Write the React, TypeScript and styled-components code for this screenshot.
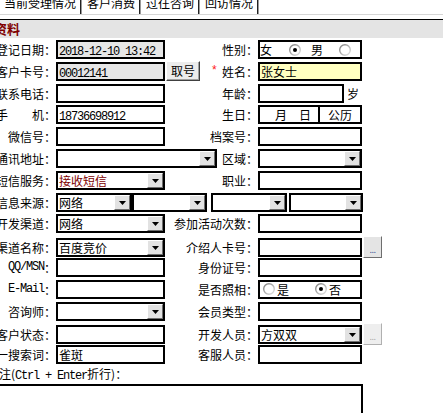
import React from 'react'
import styled, { createGlobalStyle } from 'styled-components'

const GlobalStyle = createGlobalStyle`
    html, body {
        margin: 0;
        padding: 0;
        background: #fff;
        overflow: hidden;
    }
    body {
        font-family: "Noto Sans CJK SC", "DejaVu Sans", sans-serif;
        font-size: 12px;
        color: #000;
    }
`

const Page = styled.div`
    width: 443px;
    height: 413px;
    overflow: hidden;
`

const TabBar = styled.div`
    display: flex;
    height: 14px;
    margin-left: -1px;
    border-bottom: 1px solid #d6d6d6;
    overflow: hidden;
`

const Tab = styled.div`
    padding: 0 4px 0 5px;
    margin-top: -3px;
    line-height: 12px;
    white-space: nowrap;
`

const TabDivider = styled.div`
    width: 0;
    height: 14px;
    border-left: 1px solid #222;
    border-right: 1px solid #999;
`

const SectionHeader = styled.div`
    margin-top: 4px;
    height: 18px;
    border-top: 1px solid #000;
    background: #e4e4e4;
    color: #800000;
    font-weight: bold;
    font-size: 13px;
    line-height: 18px;
    text-indent: -6px;
    white-space: nowrap;
`

const Form = styled.div`
    margin-top: 2px;
    display: flex;
    flex-direction: column;
    gap: 2.8px;
`

const Row = styled.div`
    display: grid;
    grid-template-columns: 56px 110px 92px 104px 1fr;
    height: 19px;
    align-items: center;
`

const Label = styled.div`
    display: flex;
    justify-content: flex-end;
    min-width: 0;
    white-space: nowrap;
    line-height: 19px;
`

const Mid = styled.div`
    display: flex;
    align-items: center;
    justify-content: flex-end;
    min-width: 0;
    height: 19px;
    white-space: nowrap;
`

const Latin = styled.span`
    font-family: "Liberation Mono", "DejaVu Sans Mono", monospace;
    letter-spacing: -1.2px;
`

const Box = styled.div<{ $w?: number; $bg?: string }>`
    box-sizing: border-box;
    width: ${({ $w }) => $w ?? 109}px;
    height: 19px;
    border: 2px solid #000;
    background: ${({ $bg }) => $bg ?? '#fff'};
    padding-left: 1px;
    line-height: 15px;
    white-space: nowrap;
    overflow: hidden;
`

const ChoiceBox = styled(Box)`
    display: flex;
    align-items: center;
    padding-left: 0;
`

const ChoiceText = styled.span<{ $ml: number }>`
    margin-left: ${({ $ml }) => $ml}px;
`

const RadioMark = styled.svg<{ $ml: number }>`
    flex: none;
    margin-left: ${({ $ml }) => $ml}px;
`

const DatePart = styled(Box)`
    width: 62px;
    padding-left: 15px;
`

const CalendarPart = styled(Box)`
    width: 42px;
    border-left: none;
    padding-left: 0;
    text-align: center;
`

const Pair = styled.div`
    display: flex;
    align-items: center;
`

const Unit = styled.span`
    margin-left: 3px;
`

const Select = styled.div<{ $w?: number; $ml?: number }>`
    box-sizing: border-box;
    display: flex;
    flex: none;
    width: ${({ $w }) => $w ?? 109}px;
    height: 19px;
    margin-left: ${({ $ml }) => $ml ?? 0}px;
    border: 2px solid #000;
    background: #fff;
`

const SelectValue = styled.div<{ $color?: string }>`
    flex: 1;
    min-width: 0;
    padding-left: 1px;
    line-height: 15px;
    color: ${({ $color }) => $color ?? '#000'};
    white-space: nowrap;
    overflow: hidden;
`

const DropButton = styled.div`
    box-sizing: border-box;
    display: flex;
    align-items: center;
    justify-content: center;
    width: 16px;
    height: 15px;
    padding-top: 1px;
    background: #e2e2e2;
    border-top: 1px solid #fff;
    border-left: 1px solid #fff;
    border-right: 1px solid #6e6e6e;
    border-bottom: 1px solid #6e6e6e;
`

const WideCell = styled.div`
    grid-column: 2 / 4;
    display: flex;
    align-items: center;
    justify-content: space-between;
    white-space: nowrap;
`

const SpanCell = styled.div`
    grid-column: 2 / 6;
    display: flex;
    align-items: center;
`

const FetchButton = styled.div`
    box-sizing: border-box;
    width: 34px;
    height: 20px;
    margin-right: auto;
    margin-top: -1px;
    background: #ececec;
    border-top: 1px solid #fff;
    border-left: 1px solid #fff;
    border-right: 1px solid #404040;
    border-bottom: 1px solid #404040;
    box-shadow: inset -1px -1px 0 #a0a0a0;
    text-align: center;
    line-height: 17px;
    font-size: 12px;
`

const Required = styled.span`
    margin-right: 4px;
    color: #ff2020;
    font-family: "Liberation Mono", monospace;
    font-size: 12px;
`

const EllipsisButton = styled.div<{ $disabled?: boolean }>`
    box-sizing: border-box;
    display: flex;
    align-items: flex-end;
    justify-content: center;
    width: 19px;
    height: 22px;
    margin-left: 1px;
    padding-bottom: 2px;
    background: ${({ $disabled }) => ($disabled ? '#eeeeee' : '#e4e4e4')};
    border-top: 1px solid #fff;
    border-left: 1px solid #fff;
    border-right: 1px solid ${({ $disabled }) => ($disabled ? '#b0b0b0' : '#6e6e6e')};
    border-bottom: 1px solid ${({ $disabled }) => ($disabled ? '#b0b0b0' : '#6e6e6e')};
    color: ${({ $disabled }) => ($disabled ? '#a0a0a0' : '#1c3f8c')};
    font-family: "DejaVu Sans", sans-serif;
    font-size: 8px;
    line-height: 8px;
    letter-spacing: -0.5px;
`

const NoteLabel = styled.div`
    margin-top: 2px;
    margin-left: -13px;
    height: 16px;
    line-height: 16px;
    white-space: nowrap;
`

const NoteBox = styled.div`
    box-sizing: border-box;
    margin-top: 2px;
    margin-left: -4px;
    width: 367px;
    height: 60px;
    border: 2px solid #000;
    background: #fff;
`

function Caret() {
    return (
        <svg width='7' height='4' viewBox='0 0 7 4'>
            <path d='M0 0H7L3.5 4Z' fill='#000' />
        </svg>
    )
}

function Radio({ checked, ml }: { checked?: boolean; ml: number }) {
    return (
        <RadioMark $ml={ml} width='12' height='12' viewBox='0 0 12 12'>
            <defs>
                <linearGradient id='radioRing' x1='0' y1='0' x2='1' y2='1'>
                    <stop offset='0' stopColor='#7a7a7a' />
                    <stop offset='1' stopColor='#e6e6e6' />
                </linearGradient>
            </defs>
            <circle cx='6' cy='6' r='5.3' fill='#fff' stroke='url(#radioRing)' strokeWidth='1.4' />
            {checked && <circle cx='6' cy='6' r='2' fill='#000' />}
        </RadioMark>
    )
}

function Dropdown({
    w,
    ml,
    value,
    color,
}: {
    w?: number
    ml?: number
    value?: string
    color?: string
}) {
    return (
        <Select $w={w} $ml={ml}>
            <SelectValue $color={color}>{value}</SelectValue>
            <DropButton>
                <Caret />
            </DropButton>
        </Select>
    )
}

export default function App() {
    return (
        <Page>
            <GlobalStyle />
            <TabBar>
                <Tab>当前受理情况</Tab>
                <TabDivider />
                <Tab>客户消费</Tab>
                <TabDivider />
                <Tab>过往咨询</Tab>
                <TabDivider />
                <Tab>回访情况</Tab>
                <TabDivider />
            </TabBar>
            <SectionHeader>资料</SectionHeader>
            <Form>
                <Row>
                    <Label>登记日期：</Label>
                    <Box $bg='#e6e6e6'>
                        <Latin>2018-12-10 13:42</Latin>
                    </Box>
                    <Mid>性别：</Mid>
                    <ChoiceBox $w={104}>
                        <ChoiceText $ml={0}>女</ChoiceText>
                        <Radio checked ml={17} />
                        <ChoiceText $ml={10}>男</ChoiceText>
                        <Radio ml={16} />
                    </ChoiceBox>
                </Row>
                <Row>
                    <Label>客户卡号：</Label>
                    <Box $bg='#e6e6e6'>
                        <Latin>00012141</Latin>
                    </Box>
                    <Mid>
                        <FetchButton>取号</FetchButton>
                        <Required>*</Required>
                        姓名：
                    </Mid>
                    <Box $w={104} $bg='#ffffc0'>
                        张女士
                    </Box>
                </Row>
                <Row>
                    <Label>联系电话：</Label>
                    <Box />
                    <Mid>年龄：</Mid>
                    <Pair>
                        <Box $w={86} />
                        <Unit>岁</Unit>
                    </Pair>
                </Row>
                <Row>
                    <Label>手　　机：</Label>
                    <Box>
                        <Latin>18736698912</Latin>
                    </Box>
                    <Mid>生日：</Mid>
                    <Pair>
                        <DatePart>月　日</DatePart>
                        <CalendarPart>公历</CalendarPart>
                    </Pair>
                </Row>
                <Row>
                    <Label>微信号：</Label>
                    <Box />
                    <Mid>档案号：</Mid>
                    <Box $w={104} />
                </Row>
                <Row>
                    <Label>通讯地址：</Label>
                    <WideCell>
                        <Dropdown w={161} />
                        区域：
                    </WideCell>
                    <Dropdown w={104} />
                </Row>
                <Row>
                    <Label>短信服务：</Label>
                    <Dropdown value='接收短信' color='#800000' />
                    <Mid>职业：</Mid>
                    <Box $w={104} />
                </Row>
                <Row>
                    <Label>信息来源：</Label>
                    <SpanCell>
                        <Dropdown w={76} value='网络' />
                        <Dropdown w={75} ml={0} />
                        <Dropdown w={76} ml={4} />
                        <Dropdown w={74} ml={2} />
                    </SpanCell>
                </Row>
                <Row>
                    <Label>开发渠道：</Label>
                    <Dropdown value='网络' />
                    <Mid>参加活动次数：</Mid>
                    <Box $w={104} />
                </Row>
                <Row>
                    <Label>渠道名称：</Label>
                    <Dropdown value='百度竞价' />
                    <Mid>介绍人卡号：</Mid>
                    <Box $w={104} />
                    <EllipsisButton>...</EllipsisButton>
                </Row>
                <Row>
                    <Label>
                        <Latin>QQ/MSN</Latin>：
                    </Label>
                    <Box />
                    <Mid>身份证号：</Mid>
                    <Box $w={104} />
                </Row>
                <Row>
                    <Label>
                        <Latin>E-Mail</Latin>：
                    </Label>
                    <Box />
                    <Mid>是否照相：</Mid>
                    <ChoiceBox $w={104}>
                        <Radio ml={3} />
                        <ChoiceText $ml={2}>是</ChoiceText>
                        <Radio ml={26} checked />
                        <ChoiceText $ml={2}>否</ChoiceText>
                    </ChoiceBox>
                </Row>
                <Row>
                    <Label>咨询师：</Label>
                    <Dropdown />
                    <Mid>会员类型：</Mid>
                    <Box $w={104} />
                </Row>
                <Row>
                    <Label>客户状态：</Label>
                    <Box />
                    <Mid>开发人员：</Mid>
                    <Dropdown w={104} value='方双双' />
                    <EllipsisButton $disabled>...</EllipsisButton>
                </Row>
                <Row>
                    <Label>一搜索词：</Label>
                    <Box>雀斑</Box>
                    <Mid>客服人员：</Mid>
                    <Box $w={104} />
                </Row>
            </Form>
            <NoteLabel>
                备注(<Latin>Ctrl + Enter</Latin>折行)：
            </NoteLabel>
            <NoteBox />
        </Page>
    )
}
